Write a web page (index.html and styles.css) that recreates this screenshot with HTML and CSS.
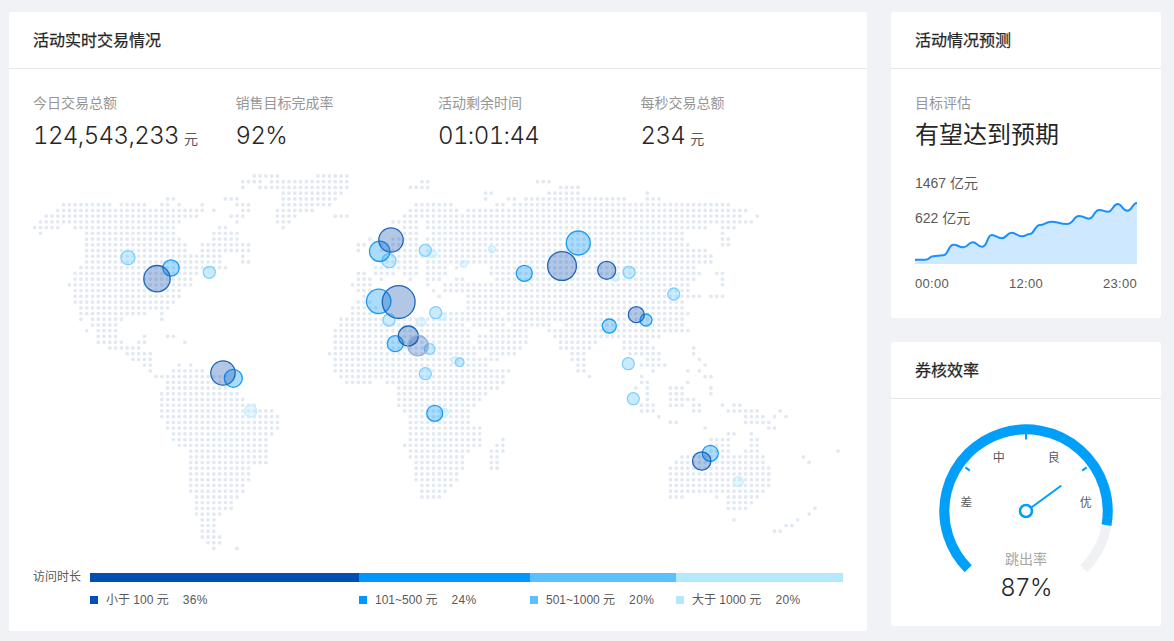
FILE: index.html
```html
<!DOCTYPE html>
<html lang="zh-CN">
<head>
<meta charset="utf-8">
<title>活动实时交易情况</title>
<link rel="stylesheet" href="styles.css">
</head>
<body>
<main class="page">
  <section class="card card-main">
    <h2 class="card-title">活动实时交易情况</h2>
    <div class="main-body">
      <div class="stats">
        <div class="stat"><div class="label">今日交易总额</div><div class="value">124,543,233<span class="unit">元</span></div></div>
        <div class="stat"><div class="label">销售目标完成率</div><div class="value">92%</div></div>
        <div class="stat"><div class="label">活动剩余时间</div><div class="value">01:01:44</div></div>
        <div class="stat"><div class="label">每秒交易总额</div><div class="value">234<span class="unit">元</span></div></div>
      </div>
      <svg class="map" viewBox="33 170 810 392" width="810" height="392">
        <g transform="translate(34.67 176) scale(5.78 5.73)">
          <path class="dots" d="M38 0h4.01M49 0h5.01M36 1h3.01M41 1h13.01M67 1h1.01M87 1h2.01M36 2h.01M39 2h15.01M65 2h3.01M91 2h3.01M43 3h10.01M78 3h1.01M89 3h5.01M106 3h.01M23 4h1.01M33 4h2.01M43 4h9.01M78 4h.01M82 4h1.01M85 4h17.01M106 4h2.01M5 5h8.01M15 5h4.01M22 5h1.01M25 5h.01M29 5h.01M35 5h2.01M43 5h8.01M66 5h6.01M80 5h1.01M83 5h37.01M4 6h25.01M31 6h.01M36 6h1.01M42 6h6.01M65 6h8.01M75 6h48.01M2 7h26.01M34 7h2.01M42 7h3.01M52 7h2.01M64 7h58.01M125 7h.01M1 8h24.01M35 8h.01M42 8h2.01M62 8h4.01M68 8h56.01M0 9h4.01M7 9h17.01M32 9h1.01M43 9h.01M64 9h2.01M68 9h48.01M119 9h2.01M1 10h.01M9 10h15.01M31 10h4.01M64 10h2.01M69 10h43.01M119 10h.01M9 11h16.01M31 11h4.01M58 11h.01M62 11h4.01M68 11h44.01M119 11h1.01M9 12h17.01M29 12h8.01M56 12h1.01M60 12h6.01M68 12h45.01M119 12h1.01M9 13h17.01M29 13h8.01M56 13h.01M60 13h6.01M68 13h48.01M9 14h23.01M36 14h.01M62 14h8.01M71 14h46.01M9 15h23.01M36 15h1.01M60 15h6.01M68 15h49.01M8 16h25.01M59 16h7.01M68 16h3.01M73 16h.01M79 16h35.01M7 17h21.01M56 17h1.01M59 17h3.01M64 17h2.01M68 17h3.01M79 17h36.01M118 17h1.01M7 18h20.01M56 18h2.01M60 18h.01M65 18h.01M68 18h2.01M73 18h1.01M80 18h34.01M119 18h.01M6 19h21.01M55 19h3.01M68 19h.01M71 19h42.01M119 19h.01M7 20h18.01M56 20h2.01M69 20h.01M71 20h42.01M7 21h18.01M57 21h.01M70 21h.01M75 21h40.01M117 21h2.01M7 22h17.01M56 22h2.01M75 22h37.01M8 23h15.01M55 23h4.01M75 23h37.01M8 24h11.01M22 24h.01M55 24h4.01M71 24h9.01M82 24h31.01M8 25h.01M10 25h5.01M22 25h.01M53 25h7.01M63 25h18.01M82 25h30.01M10 26h4.01M53 26h21.01M76 26h5.01M83 26h6.01M92 26h20.01M9 27h.01M11 27h3.01M52 27h23.01M79 27h6.01M89 27h24.01M11 28h3.01M19 28h.01M23 28h1.01M52 28h23.01M77 28h8.01M90 28h18.01M11 29h4.01M18 29h1.01M26 29h.01M52 29h23.01M77 29h8.01M91 29h6.01M102 29h4.01M13 30h5.01M52 30h24.01M77 30h7.01M91 30h5.01M102 30h5.01M114 30h.01M16 31h4.01M51 31h25.01M79 31h4.01M93 31h2.01M103 31h5.01M114 31h.01M17 32h3.01M52 32h26.01M79 32h1.01M93 32h2.01M106 32h2.01M115 32h.01M19 33h1.01M25 33h.01M27 33h.01M52 33h26.01M94 33h1.01M105 33h4.01M116 33h.01M20 34h.01M24 34h5.01M52 34h30.01M94 34h1.01M107 34h.01M113 34h.01M115 34h.01M21 35h12.01M53 35h28.01M96 35h.01M105 35h.01M116 35h1.01M23 36h10.01M54 36h4.01M61 36h20.01M105 36h1.01M113 36h.01M23 37h10.01M63 37h17.01M104 37h.01M106 37h.01M110 37h2.01M117 37h.01M22 38h13.01M63 38h15.01M106 38h.01M110 38h2.01M117 38h.01M22 39h14.01M63 39h14.01M106 39h.01M110 39h4.01M22 40h16.01M63 40h13.01M105 40h2.01M110 40h2.01M114 40h1.01M119 40h.01M121 40h1.01M22 41h19.01M64 41h11.01M105 41h2.01M114 41h1.01M120 41h5.01M129 41h.01M22 42h20.01M65 42h10.01M108 42h.01M123 42h3.01M128 42h.01M130 42h.01M23 43h19.01M65 43h10.01M110 43h1.01M123 43h4.01M23 44h19.01M65 44h12.01M116 44h.01M127 44h1.01M24 45h17.01M65 45h12.01M120 45h1.01M124 45h.01M24 46h16.01M65 46h12.01M81 46h.01M117 46h3.01M124 46h1.01M25 47h15.01M64 47h13.01M80 47h1.01M117 47h3.01M124 47h1.01M27 48h13.01M65 48h10.01M79 48h2.01M117 48h3.01M123 48h2.01M139 48h.01M27 49h13.01M65 49h9.01M79 49h1.01M112 49h14.01M133 49h.01M27 50h13.01M66 50h8.01M79 50h1.01M111 50h15.01M134 50h.01M27 51h10.01M66 51h8.01M79 51h1.01M110 51h17.01M27 52h10.01M66 52h7.01M110 52h17.01M27 53h10.01M66 53h7.01M110 53h17.01M27 54h9.01M67 54h5.01M110 54h17.01M27 55h9.01M67 55h4.01M110 55h16.01M28 56h7.01M67 56h3.01M110 56h2.01M118 56h.01M120 56h5.01M28 57h6.01M120 57h4.01M28 58h6.01M120 58h3.01M135 58h.01M28 59h4.01M134 59h.01M29 60h2.01M121 60h.01M132 60h.01M29 61h2.01M130 61h1.01M29 62h2.01M128 62h1.01M29 63h3.01M30 64h2.01M31 65h.01M35 65h.01"/>
        </g>
        <g class="bubble pale">
          <circle cx="250.7" cy="411" r="6"/><circle cx="432.7" cy="253.7" r="4"/><circle cx="421.3" cy="322" r="4.3"/><circle cx="444.3" cy="412.3" r="4"/><circle cx="738.3" cy="481.7" r="5"/><circle cx="492" cy="249.3" r="3.3"/><circle cx="463.7" cy="264" r="3.3"/><circle cx="442.7" cy="316.7" r="3.3"/><circle cx="455" cy="360.3" r="3.3"/><circle cx="615.3" cy="277.7" r="3.6"/>
        </g>
        <g class="bubble light">
          <circle cx="128" cy="257.7" r="7"/><circle cx="209.3" cy="272.3" r="6"/><circle cx="389" cy="260.7" r="7"/><circle cx="425.3" cy="250.3" r="6"/><circle cx="389" cy="320" r="6"/><circle cx="429.7" cy="349" r="5.3"/><circle cx="425.3" cy="373.7" r="6"/><circle cx="435.7" cy="312.7" r="6"/><circle cx="629" cy="272.3" r="6"/><circle cx="673.7" cy="294" r="6"/><circle cx="628.3" cy="363.7" r="6"/><circle cx="633.3" cy="398.7" r="6"/><circle cx="459.7" cy="362.3" r="4.3"/>
        </g>
        <g class="bubble mid">
          <circle cx="171" cy="268" r="8.2"/><circle cx="379.7" cy="251.3" r="10.2"/><circle cx="378.7" cy="301.3" r="12.2"/><circle cx="395.3" cy="343.7" r="8"/><circle cx="434.7" cy="413.3" r="8"/><circle cx="233.3" cy="378.3" r="9"/><circle cx="578.3" cy="243" r="12"/><circle cx="524.3" cy="273.3" r="8"/><circle cx="646" cy="320" r="6"/><circle cx="609.3" cy="326" r="7"/><circle cx="710.3" cy="453.3" r="8"/>
        </g>
        <g class="bubble dark">
          <circle cx="157" cy="278.7" r="13.2"/><circle cx="391" cy="240" r="12.2"/><circle cx="398.7" cy="302" r="16.4"/><circle cx="408.3" cy="336" r="10"/><circle cx="223" cy="373" r="12.2"/><circle cx="562" cy="266" r="14.4"/><circle cx="606.7" cy="270.3" r="9"/><circle cx="636.3" cy="314.7" r="8"/><circle cx="701.7" cy="461" r="9.2"/>
        </g>
        <circle class="bubble-soft" cx="418" cy="345.7" r="10.2"/>
      </svg>
      <div class="scale">
        <div class="scale-name">访问时长</div>
        <div class="scale-grid">
          <span class="seg c1"></span><span class="seg c2"></span><span class="seg c3"></span><span class="seg c4"></span>
          <div class="key"><i class="swatch c1"></i><span>小于 100 元</span><b>36%</b></div>
          <div class="key"><i class="swatch c2"></i><span>101~500 元</span><b>24%</b></div>
          <div class="key"><i class="swatch c3"></i><span>501~1000 元</span><b>20%</b></div>
          <div class="key"><i class="swatch c4"></i><span>大于 1000 元</span><b>20%</b></div>
        </div>
      </div>
    </div>
  </section>
  <div class="side">
    <section class="card card-forecast">
      <h2 class="card-title">活动情况预测</h2>
      <div class="forecast-body">
        <div class="label">目标评估</div>
        <div class="headline">有望达到预期</div>
        <div class="chart-wrap">
          <div class="chart-text">1467 亿元</div>
          <div class="chart-text">622 亿元</div>
          <svg class="spark" viewBox="915 200 222 64" width="222" height="64">
            <path class="spark-area" d="M915 259.7S920 259.7 925 259.7S929 256.3 933.3 256.3S938 255.3 943.3 255.3S948 244.7 953.3 244.7S958 247.3 963.3 247.3S968 242.3 972.7 242.3S977 246.7 982.3 246.7S987 235 991.7 235S997 238.3 1001.7 238.3S1007 232.7 1011.7 232.7S1017 236.3 1021.7 236.3S1026 234 1030 234S1035 225 1040 225S1045 221.7 1051.7 221.7S1059 224 1066.7 224S1073 216 1079 216S1084 218.7 1089 218.7S1094 210 1099 210S1104 211.7 1108.3 211.7S1113 204 1117.7 204S1122 210.7 1127.3 210.7S1132 203 1137 203V264H915Z"/>
            <path class="spark-line" d="M915 259.7S920 259.7 925 259.7S929 256.3 933.3 256.3S938 255.3 943.3 255.3S948 244.7 953.3 244.7S958 247.3 963.3 247.3S968 242.3 972.7 242.3S977 246.7 982.3 246.7S987 235 991.7 235S997 238.3 1001.7 238.3S1007 232.7 1011.7 232.7S1017 236.3 1021.7 236.3S1026 234 1030 234S1035 225 1040 225S1045 221.7 1051.7 221.7S1059 224 1066.7 224S1073 216 1079 216S1084 218.7 1089 218.7S1094 210 1099 210S1104 211.7 1108.3 211.7S1113 204 1117.7 204S1122 210.7 1127.3 210.7S1132 203 1137 203"/>
          </svg>
        </div>
        <div class="axis"><span>00:00</span><span>12:00</span><span>23:00</span></div>
      </div>
    </section>
    <section class="card card-gauge">
      <h2 class="card-title">券核效率</h2>
      <div class="gauge-body">
        <svg class="gauge" viewBox="891 399 270 227" width="270" height="227">
          <path class="track" d="M968.2 568.8A81.7 81.7 0 1 1 1083.8 568.8"/>
          <path class="fillarc" d="M968.2 568.8A81.7 81.7 0 1 1 1106.5 525.2"/>
          <path class="tick" d="M1026 434V439.5M965.4 467.4L969.8 470.6M1086.6 467.4L1082.2 470.6"/>
          <path class="needle" d="M1032 507L1060.7 486"/>
          <circle class="hub" cx="1026" cy="511" r="6"/>
          <text class="mark" x="966.3" y="507">差</text>
          <text class="mark" x="998.7" y="462">中</text>
          <text class="mark" x="1053.7" y="462">良</text>
          <text class="mark" x="1085.7" y="507">优</text>
          <text class="g-label" x="1026" y="564">跳出率</text>
          <text class="g-value" x="1026" y="596">87%</text>
        </svg>
      </div>
    </section>
  </div>
</main>
</body>
</html>
```
FILE: styles.css
```css
* { box-sizing: border-box; }
html, body { margin: 0; height: 100%; }
body {
  background: #f0f2f6;
  color: #262626;
  font-family: "Liberation Sans", "Noto Sans CJK SC", sans-serif;
  overflow: hidden;
}
.page {
  display: grid;
  grid-template-columns: 858px 270px;
  column-gap: 24px;
  padding: 12px 0 0 9px;
  align-items: start;
}
.card { background: #fff; border-radius: 2px; }
.card-title {
  margin: 0;
  height: 57px;
  padding: 1px 24px 0;
  border-bottom: 1px solid #e8e8e8;
  font-size: 16px;
  line-height: 55px;
  font-weight: 400;
  -webkit-text-stroke: .25px #262626;
  color: #262626;
}
.card-main { height: 619px; }
.main-body { padding: 23px 24px 0; }
.stats { display: flex; height: 78px; }
.stat { flex: 1 1 0; }
.label { font-size: 14px; line-height: 22px; color: #969696; }
.value {
  margin-top: 6px;
  font-family: Inter, "Liberation Sans", "Noto Sans CJK SC", sans-serif;
  font-size: 24px;
  font-weight: 300;
  font-variant-numeric: tabular-nums;
  letter-spacing: -.6px;
  line-height: 32px;
  color: #262626;
}
.unit {
  margin-left: 5px;
  font-family: "Liberation Sans", "Noto Sans CJK SC", sans-serif;
  font-size: 14px;
  font-weight: 400;
  letter-spacing: 0;
  color: #595959;
}
.map { display: block; }
.dots {
  fill: none;
  stroke: #e2e9f2;
  stroke-width: .66;
  stroke-linecap: round;
  stroke-dasharray: 0 1;
}
.bubble circle, .bubble-soft { stroke-width: 1.3; }
.pale circle { fill: rgba(180, 232, 255, .35); stroke: #c6eeff; }
.light circle { fill: rgba(110, 200, 255, .36); stroke: #7dd0ff; }
.mid circle { fill: rgba(0, 145, 250, .33); stroke: #1a9df5; }
.dark circle { fill: rgba(0, 70, 170, .3); stroke: #1e66b8; }
.bubble-soft { fill: rgba(0, 70, 170, .26); stroke: #8fb0da; }
.scale { display: flex; margin-top: 11px; }
.scale-name { width: 57px; font-size: 12px; line-height: 9px; color: #595959; }
.scale-grid {
  flex: 1;
  display: grid;
  grid-template-columns: 269px 171px 146px 167px;
  grid-template-rows: 9px auto;
  row-gap: 10px;
}
.seg { display: block; }
.c1 { background: #0050b3; }
.c2 { background: #0096ff; }
.c3 { background: #5bc0ff; }
.c4 { background: #b5e8ff; }
.key {
  display: flex;
  align-items: center;
  font-size: 12px;
  line-height: 16px;
  color: #595959;
}
.swatch { width: 8px; height: 8px; margin-right: 8px; }
.key b { margin-left: 14px; font-weight: 400; letter-spacing: .4px; }
.side { display: flex; flex-direction: column; gap: 24px; }
.card-forecast { height: 306px; }
.forecast-body { padding: 23px 24px 0; }
.headline { margin-top: 5px; font-size: 24px; line-height: 32px; color: #262626; }
.chart-wrap { position: relative; margin-top: 21px; height: 92px; }
.chart-text { font-size: 14px; line-height: 22px; height: 35px; color: #595959; }
.spark { position: absolute; left: 0; bottom: 0; display: block; z-index: 0; }
.spark-area { fill: #cde8ff; stroke: none; }
.spark-line { fill: none; stroke: #1890ff; stroke-width: 2; }
.axis {
  display: flex;
  justify-content: space-between;
  margin-top: 11px;
  font-size: 13px;
  line-height: 18px;
  letter-spacing: .3px;
  color: #595959;
}
.card-gauge { height: 284px; }
.gauge { display: block; }
.track, .fillarc { fill: none; stroke-width: 10; }
.track { stroke: #eff1f5; }
.fillarc { stroke: #009ffa; }
.tick { stroke: #009ffa; stroke-width: 2; fill: none; }
.needle { stroke: #009ffa; stroke-width: 2; stroke-linecap: round; fill: none; }
.hub { fill: #fff; stroke: #009ffa; stroke-width: 2.6; }
.mark { font-size: 12px; fill: #595959; text-anchor: middle; }
.g-label { font-size: 14px; fill: #a6a6a6; text-anchor: middle; }
.g-value {
  font-family: Inter, "Liberation Sans", sans-serif;
  font-size: 24px;
  font-weight: 300;
  font-variant-numeric: tabular-nums;
  letter-spacing: -.6px;
  fill: #262626;
  text-anchor: middle;
}
```
